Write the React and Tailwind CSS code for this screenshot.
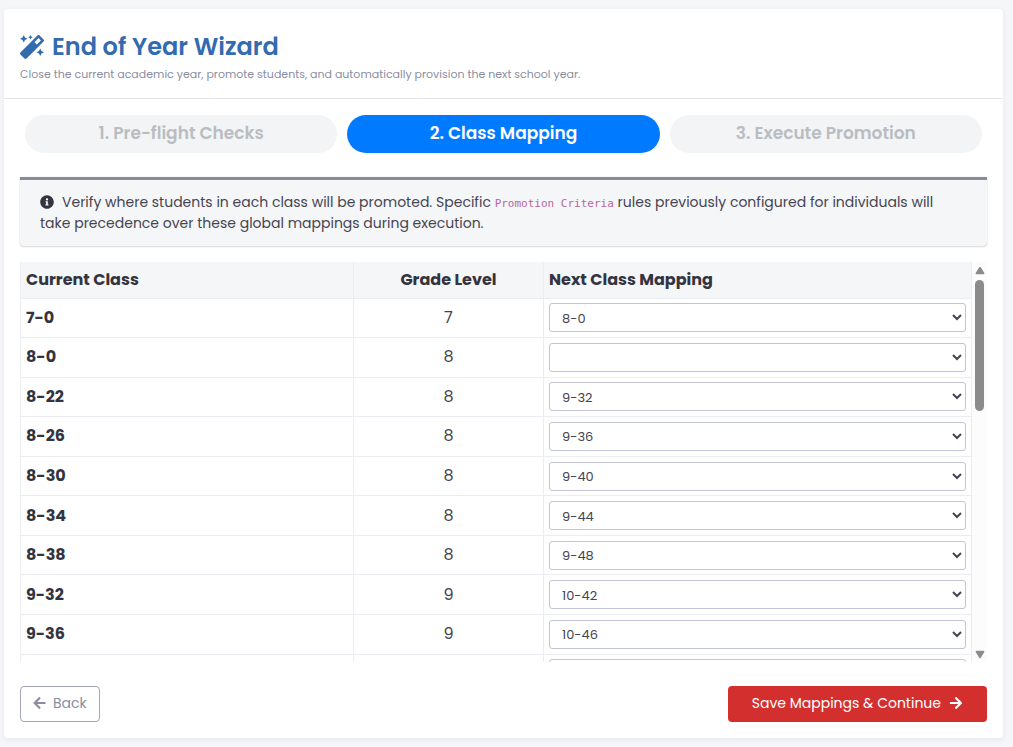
import { useState } from 'react';
import { FaArrowLeft, FaArrowRight, FaInfoCircle, FaMagic } from 'react-icons/fa';

const STEPS = ['1. Pre-flight Checks', '2. Class Mapping', '3. Execute Promotion'];

const CLASSES = [
  { name: '7-0',   grade: 7,  next: '8-0' },
  { name: '8-0',   grade: 8,  next: '' },
  { name: '8-22',  grade: 8,  next: '9-32' },
  { name: '8-26',  grade: 8,  next: '9-36' },
  { name: '8-30',  grade: 8,  next: '9-40' },
  { name: '8-34',  grade: 8,  next: '9-44' },
  { name: '8-38',  grade: 8,  next: '9-48' },
  { name: '9-32',  grade: 9,  next: '10-42' },
  { name: '9-36',  grade: 9,  next: '10-46' },
  { name: '9-40',  grade: 9,  next: '10-50' },
  { name: '9-44',  grade: 9,  next: '10-54' },
  { name: '9-48',  grade: 9,  next: '10-58' },
  { name: '10-42', grade: 10, next: '11-52' },
  { name: '10-46', grade: 10, next: '11-56' },
  { name: '10-50', grade: 10, next: '11-60' },
  { name: '10-54', grade: 10, next: '11-64' },
  { name: '10-58', grade: 10, next: '11-68' },
  { name: '11-52', grade: 11, next: '12-62' },
  { name: '11-56', grade: 11, next: '12-66' },
  { name: '11-60', grade: 11, next: '12-70' },
  { name: '11-64', grade: 11, next: '12-74' },
  { name: '11-68', grade: 11, next: '12-78' },
  { name: '12-62', grade: 12, next: '' },
  { name: '12-66', grade: 12, next: '' },
  { name: '12-70', grade: 12, next: '' },
  { name: '12-74', grade: 12, next: '' },
  { name: '12-78', grade: 12, next: '' },
];

const OPTIONS = ['', ...new Set(CLASSES.map((c) => c.next).filter(Boolean))];

function StepPills({ active }) {
  return (
    <ol className="grid grid-cols-3 gap-[10px] px-[5px]">
      {STEPS.map((label, i) => (
        <li
          key={label}
          className={
            i === active
              ? 'h-[38px] rounded-full bg-[#007bff] text-center text-[17px] leading-[37px] font-semibold text-white'
              : 'h-[38px] rounded-full bg-[#f3f4f6] text-center text-[17px] leading-[37px] font-semibold text-[#b9bdc1]'
          }
        >
          {label}
        </li>
      ))}
    </ol>
  );
}

function ScrollBar({ ratio, progress }) {
  return (
    <div aria-hidden="true" className="flex w-[15px] shrink-0 flex-col items-center bg-[#fcfcfc] pt-1 pb-[3px]">
      <svg viewBox="0 0 10 9" className="h-[9px] w-[10px] shrink-0" fill="#8b8b8b">
        <path d="M4.2 1.2a1 1 0 0 1 1.6 0L9.3 7a.8.8 0 0 1-.7 1.2H1.4A.8.8 0 0 1 .7 7z" />
      </svg>
      <div className="my-[5px] flex w-full flex-1 flex-col items-center">
        <div style={{ flexGrow: progress * (1 - ratio) }} />
        <div className="w-[9px] rounded-full bg-[#8b8b8b]" style={{ flexGrow: ratio }} />
        <div style={{ flexGrow: (1 - progress) * (1 - ratio) }} />
      </div>
      <svg viewBox="0 0 10 9" className="h-[9px] w-[10px] shrink-0" fill="#8b8b8b">
        <path d="M4.2 7.8a1 1 0 0 0 1.6 0L9.3 2a.8.8 0 0 0-.7-1.2H1.4A.8.8 0 0 0 .7 2z" />
      </svg>
    </div>
  );
}

function MappingTable() {
  const [mapping, setMapping] = useState(() => Object.fromEntries(CLASSES.map((c) => [c.name, c.next])));
  const [progress, setProgress] = useState(0);

  const handleScroll = (e) => {
    const el = e.currentTarget;
    setProgress(el.scrollTop / (el.scrollHeight - el.clientHeight || 1));
  };

  return (
    <div className="flex h-[400px]">
      <div onScroll={handleScroll} className="min-w-0 flex-1 overflow-y-auto [scrollbar-width:none]">
        <table className="h-[1105px] w-full table-fixed border-collapse text-base leading-6">
          <thead>
            <tr className="h-9 bg-[#f5f6f8] text-[#343441]">
              <th className="w-[35%] border border-t-0 border-[#ebedf2] px-[5px] text-left font-bold">Current Class</th>
              <th className="w-[20%] border border-t-0 border-[#ebedf2] px-[5px] text-center font-bold">Grade Level</th>
              <th className="w-[45%] border border-t-0 border-[#ebedf2] px-[5px] text-left font-bold">Next Class Mapping</th>
            </tr>
          </thead>
          <tbody>
            {CLASSES.map((c) => (
              <tr key={c.name}>
                <td className="border border-[#ebedf2] px-[5px] font-bold text-[#343441]">{c.name}</td>
                <td className="border border-[#ebedf2] px-[5px] text-center text-[#464450]">{c.grade}</td>
                <td className="border border-[#ebedf2] px-[5px]">
                  <select
                    aria-label={`Next class for ${c.name}`}
                    value={mapping[c.name]}
                    onChange={(e) => setMapping((p) => ({ ...p, [c.name]: e.target.value }))}
                    className="block h-[29px] w-full rounded-[3px] border border-[#c3c4d4] bg-white px-2 pt-px text-[13px] text-[#464450]"
                  >
                    {OPTIONS.map((o) => (
                      <option key={o} value={o}>{o}</option>
                    ))}
                  </select>
                </td>
              </tr>
            ))}
          </tbody>
        </table>
      </div>
      <ScrollBar ratio={0.36} progress={progress} />
    </div>
  );
}

export default function App() {
  return (
    <div className="min-h-screen bg-[#f5f6f8] pt-[9px] pr-[10px] pb-[9px] pl-1 font-[Poppins,Inter,sans-serif] text-[#464450]">
      <main className="rounded bg-white shadow-[0_2px_6px_rgba(60,70,90,0.08)]">
        {/* Header */}
        <header className="border-b border-[#e4e6ea] px-4 pt-[23px] pb-[15px]">
          <h1 className="flex items-center gap-2 text-2xl leading-[30px] font-semibold text-[#326bb0]">
            <FaMagic className="h-6 w-6" />
            End of Year Wizard
          </h1>
          <p className="mt-1 text-[11px] leading-[17px] text-[#8b8d9f]">
            Close the current academic year, promote students, and automatically provision the next school year.
          </p>
        </header>

        <div className="p-4">
          <StepPills active={1} />

          {/* Info callout */}
          <div className="mt-6 rounded-b border-t-[3px] border-[#898b9b] bg-[#f5f6f8] px-5 py-3 text-sm leading-[21px] shadow-[0_0_1px_rgba(0,0,0,0.2),0_1px_2px_rgba(0,0,0,0.14)]">
            <FaInfoCircle className="mr-2 inline h-[14px] w-[14px] align-[-2px] text-[#343441]" />
            Verify where students in each class will be promoted. Specific{' '}
            <code className="font-['DejaVu_Sans_Mono',monospace] text-[11px] leading-none text-[#b8669f]">Promotion Criteria</code>{' '}
            rules previously configured for individuals will take precedence over these global mappings during execution.
          </div>

          <div className="mt-4">
            <MappingTable />
          </div>

          {/* Actions */}
          <div className="mt-6 flex items-center justify-between text-sm">
            <button
              type="button"
              className="flex h-9 items-center gap-[7px] rounded border border-[#a2a6b8] px-3 pb-0.5 text-[#8b8d9f]"
            >
              <FaArrowLeft className="h-[14px] w-[13px]" />
              Back
            </button>
            <button
              type="button"
              className="flex h-9 items-center gap-2 rounded bg-[#d32f2f] px-6 pb-0.5 text-white"
            >
              Save Mappings &amp; Continue
              <FaArrowRight className="h-[14px] w-[14px]" />
            </button>
          </div>
        </div>
      </main>
    </div>
  );
}
